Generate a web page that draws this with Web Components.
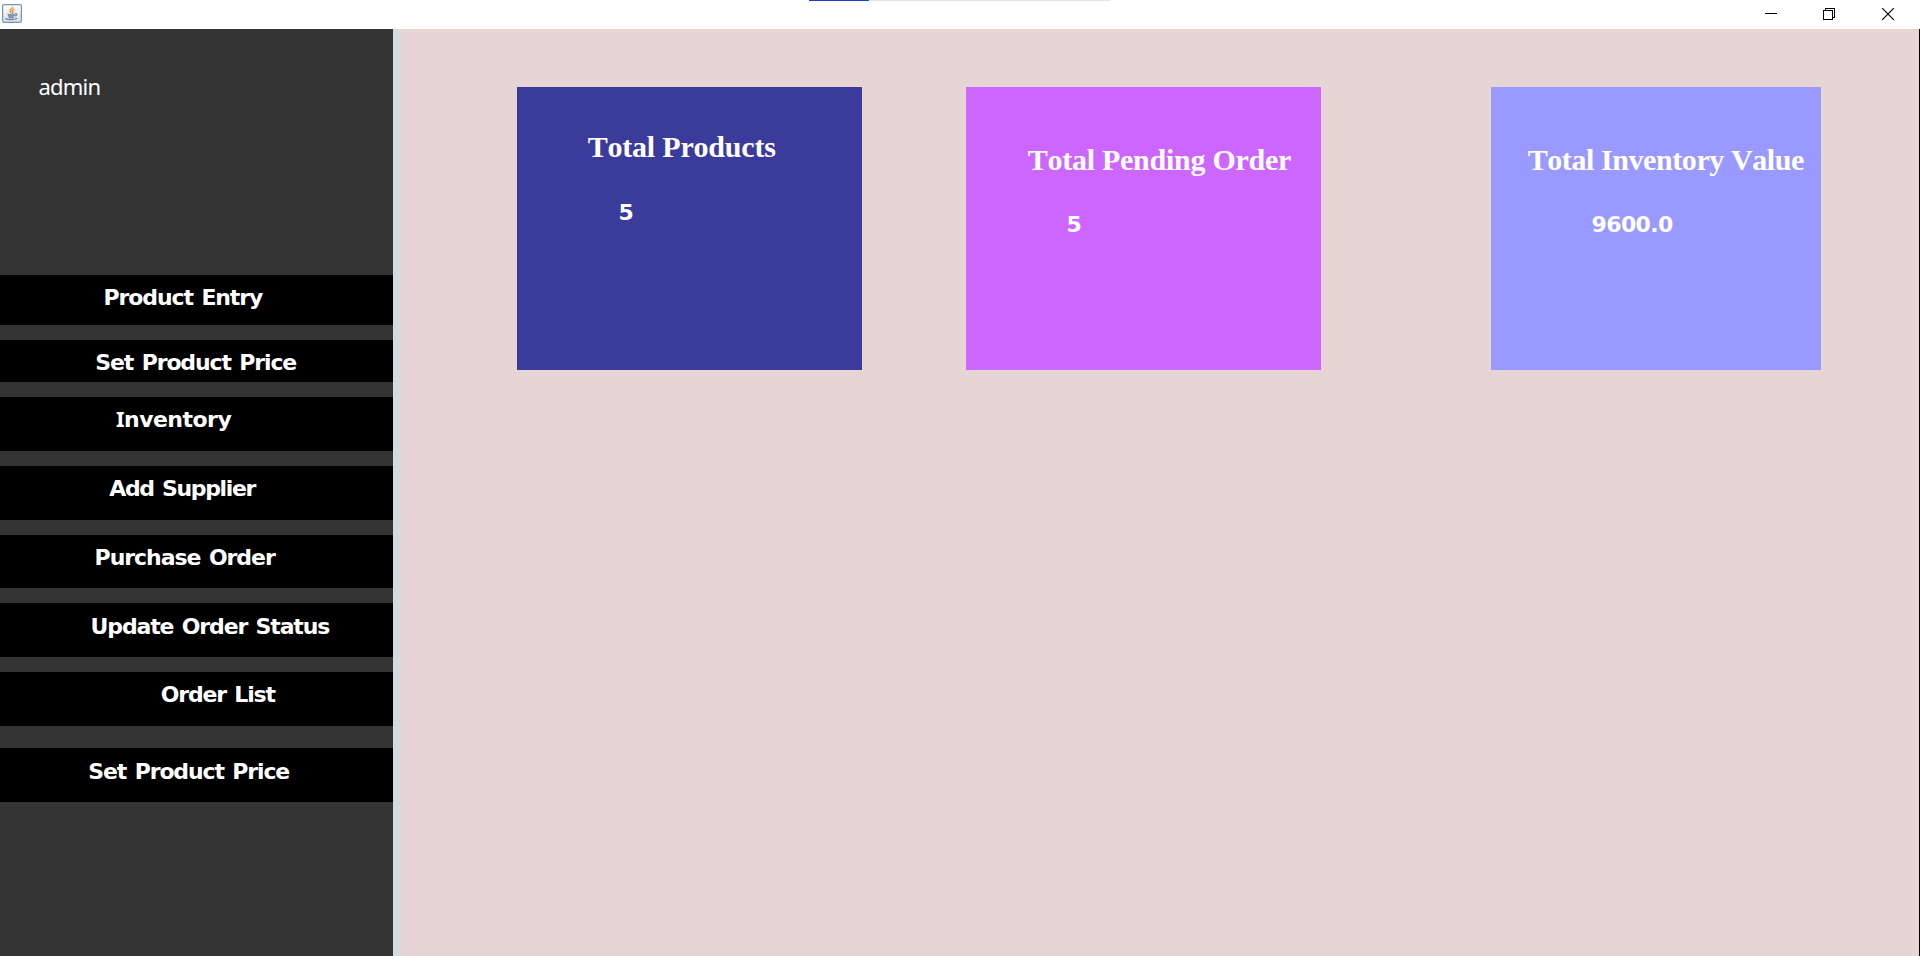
<!DOCTYPE html>
<html lang="en">
<head>
<meta charset="utf-8">
<title>Inventory Dashboard</title>
<style>
html,body{margin:0;padding:0;height:100%;overflow:hidden;background:#fff}
</style>
</head>
<body>
<app-window></app-window>
<script>
// Line of label text with its ink start, ink width and baseline given relative to the container.
class TextLabel extends HTMLElement {
  connectedCallback() {
    const root = this.attachShadow({mode: 'open'});
    const serif = this.hasAttribute('serif');
    const regular = this.hasAttribute('regular');
    const size = serif ? 30 : 22;
    const weight = regular ? 400 : 700;
    const family = serif ? '"Liberation Serif", serif' : regular ? '"Noto Sans", sans-serif' : '"DejaVu Sans", sans-serif';
    const num = n => parseFloat(this.getAttribute(n));
    const text = this.textContent;
    const ctx = document.createElement('canvas').getContext('2d');
    ctx.font = `${weight} ${size}px ${family}`;
    ctx.fontKerning = 'none';
    const m = ctx.measureText(text);
    const word = serif ? 0 : 2;
    const ink = m.actualBoundingBoxLeft + m.actualBoundingBoxRight + word * (text.split(' ').length - 1);
    const spacing = text.length > 1 ? (num('w') - ink) / (text.length - 1) : 0;
    const line = 32;
    const a = Math.round(m.fontBoundingBoxAscent), d = Math.round(m.fontBoundingBoxDescent);
    const base = Math.round((line - a - d) / 2 + a);
    // The sans capital I is drawn with slab serifs.
    const slab = !serif && text[0] === 'I' ? ':host::first-letter{font-family:"Noto Sans",sans-serif}' : '';
    root.innerHTML = `<style>
      :host{display:block;height:${line}px;font:${weight} ${size}px/${line}px ${family};
        font-kerning:none;letter-spacing:${spacing}px;word-spacing:${word}px;color:#fff;white-space:nowrap;
        margin-left:${num('x') + m.actualBoundingBoxLeft}px;margin-top:${num('base') - base}px}
      ${slab}
    </style><slot></slot>`;
  }
}
class TitleBar extends HTMLElement {
  connectedCallback() {
    this.attachShadow({mode: 'open'}).innerHTML = `<style>
      :host{display:flex;justify-content:space-between;height:29px;background:#fff;position:relative}
      svg{display:block}
      .progress{position:absolute;left:809px;top:0;width:301px;height:1px;background:linear-gradient(90deg,#233fbd 60px,#e5e5e5 60px)}
    </style>
    <svg width="24" height="29" viewBox="0 0 24 29">
      <defs><linearGradient id="g" x2="0" y2="1"><stop stop-color="#fff"/><stop offset="1" stop-color="#dcdcde"/></linearGradient></defs>
      <rect x="2.6" y="4.6" width="18.8" height="17.8" rx="1.6" fill="url(#g)" stroke="#7694ab" stroke-width="1.2"/>
      <path d="M12.6 6.8C13.4 9 9.3 9.2 10 11.2C10.2 12 11 12.5 11.3 13.4M14.4 9.2C11.8 10.2 12 11.1 12.8 12.1C13.2 12.7 12.8 13.2 12.3 13.6" fill="none" stroke="#ef9045" stroke-width="1.5"/>
      <path d="M7.2 13.5Q11 14.7 15 13.6L14.6 16Q11.5 17.6 8.3 16.4Z" fill="#7892ab"/>
      <path d="M15 13.8C17.4 13.2 17.4 15.5 14.8 16.1M8.6 17.3Q11.5 18.3 14 17.2M5.6 18.2C5.2 19.8 14.5 20.2 17 18.2" fill="none" stroke="#6785a2" stroke-width="1.2"/>
    </svg>
    <svg width="160" height="29" viewBox="1760 0 160 29" fill="none" stroke="#000">
      <path d="M1765 13.5H1777"/>
      <path d="M1823.5 10.5H1832.5V19.5H1823.5ZM1825.5 10.5V8.5H1834.5V17.5H1832.5" shape-rendering="crispEdges"/>
      <path d="M1882.2 8.2L1893.8 19.8M1893.8 8.2L1882.2 19.8" stroke-width="1.15"/>
    </svg><div class="progress"></div>`;
  }
}
class NavItem extends HTMLElement {
  connectedCallback() {
    this.attachShadow({mode: 'open'}).innerHTML = `<style>
      :host{display:flow-root;background:#000;height:${this.getAttribute('height')}px}
    </style><slot></slot>`;
  }
}
class SideBar extends HTMLElement {
  connectedCallback() {
    // label, top gap, height, ink start, ink width, baseline
    const items = [
      ['Product Entry', 0, 50, 105.6, 157.4, 31],
      ['Set Product Price', 15, 42, 96.3, 200, 31],
      ['Inventory', 15, 54, 118, 113, 29],
      ['Add Supplier', 15, 54, 109.3, 147.2, 31],
      ['Purchase Order', 15, 53, 96.6, 179.3, 31],
      ['Update Order Status', 15, 54, 92.6, 237.6, 32],
      ['Order List', 15, 54, 161.8, 114.6, 31],
      ['Set Product Price', 22, 54, 89.3, 200, 32]
    ];
    this.attachShadow({mode: 'open'}).innerHTML = `<style>
      :host{display:block;background:#333}
      header{display:flow-root;height:246px}
      nav{display:flex;flex-direction:column}
    </style><header><text-label regular x="39.5" w="60" base="66">admin</text-label></header>
    <nav>${items.map(([t, gap, h, x, w, b]) =>
      `<nav-item height="${h}" style="margin-top:${gap}px"><text-label x="${x}" w="${w}" base="${b}">${t}</text-label></nav-item>`).join('')}</nav>`;
  }
}
class StatCard extends HTMLElement {
  connectedCallback() {
    this.attachShadow({mode: 'open'}).innerHTML = `<style>
      :host{display:grid;grid-template-rows:100px 1fr;height:283px}
      div{display:flow-root}
    </style><div><slot name="title"></slot></div><div><slot name="value"></slot></div>`;
  }
}
class DashboardView extends HTMLElement {
  connectedCallback() {
    this.attachShadow({mode: 'open'}).innerHTML = `<style>
      :host{display:flex;align-items:flex-start;padding:58px 0 0 116px;background:#e7d5d5;border-right:1px solid #000}
      .products{width:345px;background:#3b3b9c}
      .pending{width:355px;margin-left:104px;background:#cc66ff}
      .value{width:330px;margin-left:170px;background:#9999ff}
    </style>
    <stat-card class="products"><text-label slot="title" serif x="70.7" w="187.5" base="71">Total Products</text-label><text-label slot="value" x="102.5" base="34">5</text-label></stat-card>
    <stat-card class="pending"><text-label slot="title" serif x="61.7" w="263.3" base="84">Total Pending Order</text-label><text-label slot="value" x="101.5" base="46">5</text-label></stat-card>
    <stat-card class="value"><text-label slot="title" serif x="36.7" w="276.3" base="84">Total Inventory Value</text-label><text-label slot="value" x="101.5" w="80.5" base="46">9600.0</text-label></stat-card>`;
  }
}
class AppWindow extends HTMLElement {
  connectedCallback() {
    this.attachShadow({mode: 'open'}).innerHTML = `<style>
      :host{display:grid;grid-template-rows:29px 1fr;height:100vh}
      main{display:grid;grid-template-columns:393px 8px 1fr}
      .divider{background:#d6d9e2}
    </style><title-bar></title-bar><main><side-bar></side-bar><div class="divider"></div><dashboard-view></dashboard-view></main>`;
  }
}
customElements.define('text-label', TextLabel);
customElements.define('title-bar', TitleBar);
customElements.define('nav-item', NavItem);
customElements.define('side-bar', SideBar);
customElements.define('stat-card', StatCard);
customElements.define('dashboard-view', DashboardView);
customElements.define('app-window', AppWindow);
</script>
</body>
</html>
